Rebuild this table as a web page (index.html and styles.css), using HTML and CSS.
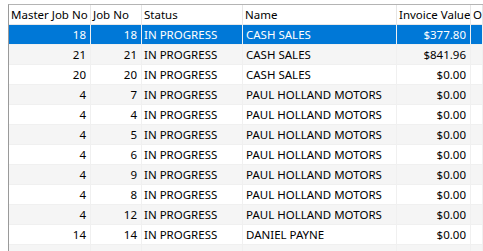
FILE: index.html
```html
<!DOCTYPE html>
<html>
<head>
<meta charset="utf-8">
<link rel="stylesheet" href="styles.css">
</head>
<body>
<div class="grid">
  <div class="row head">
    <div class="c c1">Master Job No</div>
    <div class="c c2">Job No</div>
    <div class="c c3">Status</div>
    <div class="c c4">Name</div>
    <div class="c c5">Invoice Value</div>
    <div class="c c6">O</div>
  </div>
  <div class="row sel">
    <div class="c c1 num">18</div><div class="c c2 num">18</div><div class="c c3">IN PROGRESS</div><div class="c c4">CASH SALES</div><div class="c c5 num">$377.80</div><div class="c c6"></div>
  </div>
  <div class="row alt">
    <div class="c c1 num">21</div><div class="c c2 num">21</div><div class="c c3">IN PROGRESS</div><div class="c c4">CASH SALES</div><div class="c c5 num">$841.96</div><div class="c c6"></div>
  </div>
  <div class="row">
    <div class="c c1 num">20</div><div class="c c2 num">20</div><div class="c c3">IN PROGRESS</div><div class="c c4">CASH SALES</div><div class="c c5 num">$0.00</div><div class="c c6"></div>
  </div>
  <div class="row alt">
    <div class="c c1 num">4</div><div class="c c2 num">7</div><div class="c c3">IN PROGRESS</div><div class="c c4">PAUL HOLLAND MOTORS</div><div class="c c5 num">$0.00</div><div class="c c6"></div>
  </div>
  <div class="row">
    <div class="c c1 num">4</div><div class="c c2 num">4</div><div class="c c3">IN PROGRESS</div><div class="c c4">PAUL HOLLAND MOTORS</div><div class="c c5 num">$0.00</div><div class="c c6"></div>
  </div>
  <div class="row alt">
    <div class="c c1 num">4</div><div class="c c2 num">5</div><div class="c c3">IN PROGRESS</div><div class="c c4">PAUL HOLLAND MOTORS</div><div class="c c5 num">$0.00</div><div class="c c6"></div>
  </div>
  <div class="row">
    <div class="c c1 num">4</div><div class="c c2 num">6</div><div class="c c3">IN PROGRESS</div><div class="c c4">PAUL HOLLAND MOTORS</div><div class="c c5 num">$0.00</div><div class="c c6"></div>
  </div>
  <div class="row alt">
    <div class="c c1 num">4</div><div class="c c2 num">9</div><div class="c c3">IN PROGRESS</div><div class="c c4">PAUL HOLLAND MOTORS</div><div class="c c5 num">$0.00</div><div class="c c6"></div>
  </div>
  <div class="row">
    <div class="c c1 num">4</div><div class="c c2 num">8</div><div class="c c3">IN PROGRESS</div><div class="c c4">PAUL HOLLAND MOTORS</div><div class="c c5 num">$0.00</div><div class="c c6"></div>
  </div>
  <div class="row alt">
    <div class="c c1 num">4</div><div class="c c2 num">12</div><div class="c c3">IN PROGRESS</div><div class="c c4">PAUL HOLLAND MOTORS</div><div class="c c5 num">$0.00</div><div class="c c6"></div>
  </div>
  <div class="row">
    <div class="c c1 num">14</div><div class="c c2 num">14</div><div class="c c3">IN PROGRESS</div><div class="c c4">DANIEL PAYNE</div><div class="c c5 num">$0.00</div><div class="c c6"></div>
  </div>
  <div class="row alt">
    <div class="c c1 num"></div><div class="c c2 num"></div><div class="c c3"></div><div class="c c4"></div><div class="c c5 num"></div><div class="c c6"></div>
  </div>
</div>
</body>
</html>
```
FILE: styles.css
```css
html, body {
  margin: 0;
  padding: 0;
  background: #ffffff;
  overflow: hidden;
  width: 483px;
  height: 251px;
}
.grid {
  margin: 4px 0 0 8px;
  border-top: 1px solid #b4b4b4;
  border-left: 1px solid #9a9a9a;
  width: 475px;
  height: 246px;
  overflow: hidden;
  font-family: "Noto Sans", "Open Sans", sans-serif;
  font-size: 11.5px;
  color: #000;
}
.row {
  display: flex;
  height: 20px;
  box-sizing: border-box;
  border-bottom: 1px solid #f0f0f0;
  background: #ffffff;
}
.row.alt { background: #f5f5f5; }
.row.sel { background: #0078d7; color: #fff; }
.row.head { background: #fff; border-bottom: 1px solid #e8e8e8; }
.c {
  box-sizing: border-box;
  border-right: 1px solid #f0f0f0;
  padding: 0 3px 0 3px;
  line-height: 19px;
  white-space: nowrap;
  overflow: hidden;
  flex: none;
}
.head .c { border-right-color: #e5e5e5; padding-left: 2px; }
.num { text-align: right; padding-right: 4px; }
.c1 { width: 82px; }
.c2 { width: 51px; }
.c3 { width: 101px; padding-left: 2px; }
.c4 { width: 154px; }
.c5 { width: 74px; }
.c6 { width: 12px; padding-left: 2px; }
```
